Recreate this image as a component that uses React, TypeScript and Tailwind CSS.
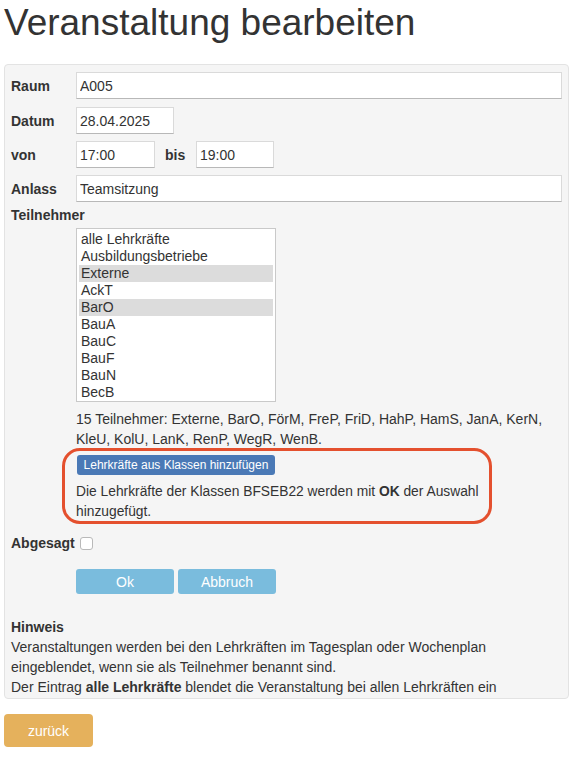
import { useState } from "react";

const options = [
  "alle Lehrkräfte",
  "Ausbildungsbetriebe",
  "Externe",
  "AckT",
  "BarO",
  "BauA",
  "BauC",
  "BauF",
  "BauN",
  "BecB",
];

const selected = ["Externe", "BarO"];

function TextInput({ value, className }: { value: string; className: string }) {
  return (
    <input
      readOnly
      value={value}
      className={`h-[27px] border border-[#dadada] border-b-[#b8b8b8] bg-white px-[3px] [font-family:Liberation_Sans,Arial,sans-serif] text-[14px] text-[#333] outline-none ${className}`}
    />
  );
}

export default function App() {
  const [cancelled, setCancelled] = useState(false);

  return (
    <div className="px-1 [font-family:Liberation_Sans,Arial,sans-serif] text-[14px] leading-[20px] text-[#333]">
      <h1 className="h-[64px] pt-[3px] text-[37px] leading-[40px] font-normal">
        Veranstaltung bearbeiten
      </h1>

      <div className="rounded border border-[#e3e3e3] bg-[#f5f5f5] px-[6px] pt-[7px] pb-[1px]">
        <div className="flex items-center">
          <label className="w-[65px] shrink-0 font-bold">Raum</label>
          <TextInput value="A005" className="flex-1" />
        </div>
        <div className="mt-[8px] flex items-center">
          <label className="w-[65px] shrink-0 font-bold">Datum</label>
          <TextInput value="28.04.2025" className="w-[98px]" />
        </div>
        <div className="mt-[7px] flex items-center">
          <label className="w-[65px] shrink-0 font-bold">von</label>
          <TextInput value="17:00" className="w-[79px]" />
          <label className="w-[41px] shrink-0 pl-[10px] font-bold">bis</label>
          <TextInput value="19:00" className="w-[78px]" />
        </div>
        <div className="mt-[7px] flex items-center">
          <label className="w-[65px] shrink-0 font-bold">Anlass</label>
          <TextInput value="Teamsitzung" className="flex-1" />
        </div>

        <div className="mt-[3px] font-bold">Teilnehmer</div>
        <div className="ml-[65px]">
          <ul className="mt-[3px] h-[174px] w-[200px] overflow-hidden border border-[#c9c9c9] bg-white p-[2px]">
            {options.map((opt) => (
              <li
                key={opt}
                className={`px-[2px] leading-[17px] ${selected.includes(opt) ? "bg-[#dcdcdc]" : ""}`}
              >
                {opt}
              </li>
            ))}
          </ul>

          <p className="mt-[7px]">
            15 Teilnehmer: Externe, BarO, FörM, FreP, FriD, HahP, HamS, JanA, KerN, KleU, KolU,
            LanK, RenP, WegR, WenB.
          </p>

          <div className="relative mt-[5px]">
            <button className="ml-[1px] h-[20px] w-[198px] rounded-[3px] bg-[#4a79b6] text-[12px] leading-[20px] text-white">
              Lehrkräfte aus Klassen hinzufügen
            </button>
            <p className="mt-[7px] w-[440px] text-[13.8px]">
              Die Lehrkräfte der Klassen BFSEB22 werden mit <b>OK</b> der Auswahl hinzugefügt.
            </p>
            <div className="pointer-events-none absolute top-[-6px] left-[-14px] h-[76px] w-[430px] rounded-[18px] border-[3px] border-[#e4502e]" />
          </div>
        </div>

        <div className="mt-[11px] flex items-center">
          <span className="font-bold">Abgesagt</span>
          <input
            type="checkbox"
            checked={cancelled}
            onChange={(e) => setCancelled(e.target.checked)}
            className="ml-[5px] h-[13px] w-[13px] appearance-none rounded-[3px] border border-[#b9b9b9] bg-white"
          />
        </div>

        <div className="mt-[16px] ml-[65px] flex gap-[4px]">
          <button className="h-[25px] w-[98px] rounded-[3px] bg-[#7abcdd] text-white">Ok</button>
          <button className="h-[25px] w-[98px] rounded-[3px] bg-[#7abcdd] text-white">Abbruch</button>
        </div>

        <div className="mt-[23px] font-bold">Hinweis</div>
        <p className="w-[520px]">
          Veranstaltungen werden bei den Lehrkräften im Tagesplan oder Wochenplan eingeblendet, wenn
          sie als Teilnehmer benannt sind.
        </p>
        <p>
          Der Eintrag <b>alle Lehrkräfte</b> blendet die Veranstaltung bei allen Lehrkräften ein
        </p>
      </div>

      <button className="mt-[15px] h-[33px] w-[89px] rounded-[4px] bg-[#e5b15c] text-white">
        zurück
      </button>
    </div>
  );
}
